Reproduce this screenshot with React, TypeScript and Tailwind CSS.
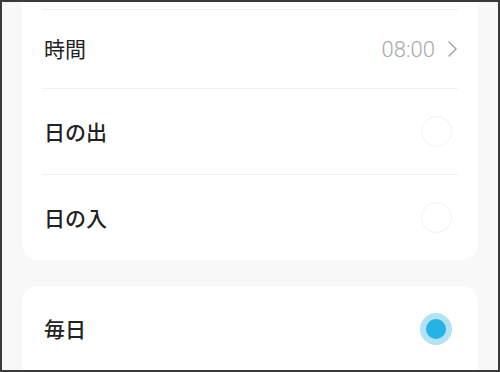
import React from "react";

const font = { fontFamily: '"Noto Sans CJK JP", "Noto Sans", sans-serif' };

function Radio({ checked }: { checked?: boolean }) {
  if (checked) {
    return (
      <div className="mr-[6px] flex h-[32px] w-[32px] items-center justify-center rounded-full bg-[#b3e2f3]">
        <div className="h-[20px] w-[20px] rounded-full bg-[#25b3e5]" />
      </div>
    );
  }
  return <div className="mr-[6px] h-[31px] w-[31px] rounded-full border-[1.5px] border-[#eef1f3] bg-white" />;
}

export default function App() {
  return (
    <div
      className="h-[372px] w-[500px] overflow-hidden border-2 border-[#3a3a3a] bg-[#f8f8f8]"
      style={font}
    >
      <div className="mx-5 -mt-[78px] rounded-2xl bg-white pl-[22px] pr-5">
        <div className="h-[85px]" />
        <div className="-ml-[2px] h-px bg-[#f0f0f0]" />
        <div className="flex h-[78px] items-center justify-between">
          <span className="text-[21px] font-normal text-[#222]">時間</span>
          <div className="flex items-center gap-[12px]">
            <span className="text-[22px] font-light text-[#a8a8a8]" style={{ fontFamily: 'Roboto, "Noto Sans", sans-serif' }}>08:00</span>
            <svg width="11" height="18" viewBox="0 0 11 18" fill="none">
              <path d="M2 2l7 7-7 7" stroke="#a8a8a8" strokeWidth="1.6" strokeLinecap="round" strokeLinejoin="round" />
            </svg>
          </div>
        </div>
        <div className="-ml-[2px] h-px bg-[#f0f0f0]" />
        <div className="flex h-[85px] items-center justify-between">
          <span className="text-[21px] font-medium text-[#222]">日の出</span>
          <Radio />
        </div>
        <div className="-ml-[2px] h-px bg-[#f0f0f0]" />
        <div className="flex h-[85px] items-center justify-between">
          <span className="text-[21px] font-medium text-[#222]">日の入</span>
          <Radio />
        </div>
      </div>
      <div className="mx-5 mt-[26px] rounded-2xl bg-white pl-[22px] pr-5">
        <div className="flex h-[86px] items-center justify-between">
          <span className="text-[21px] font-medium text-[#222]">毎日</span>
          <Radio checked />
        </div>
        <div className="h-[40px]" />
      </div>
    </div>
  );
}
